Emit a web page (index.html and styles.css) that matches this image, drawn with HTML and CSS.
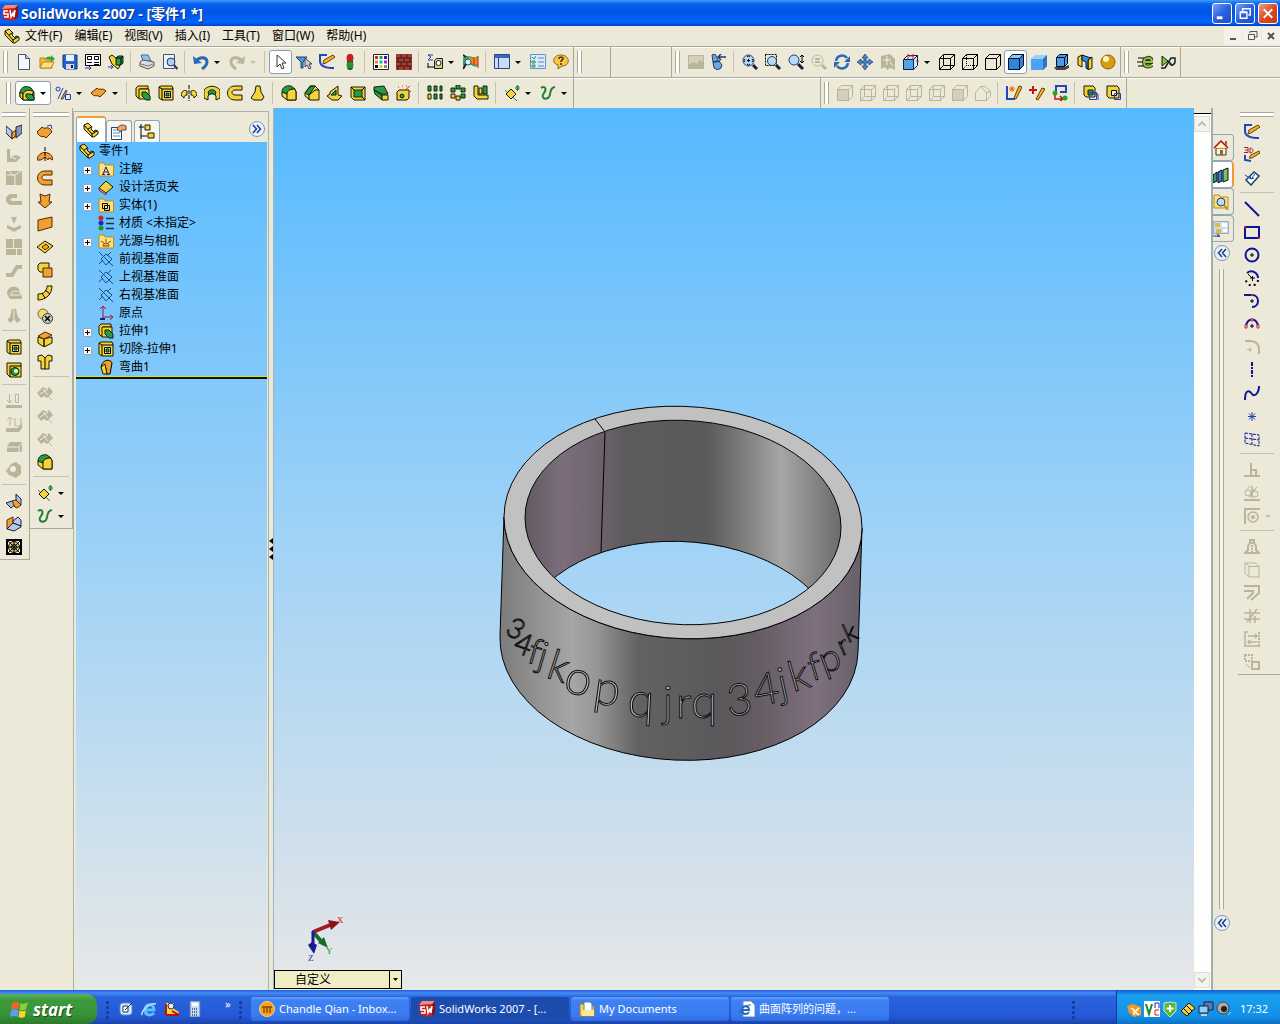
FILE: index.html
```
<!DOCTYPE html>
<html lang="zh-CN">
<head>
	<meta charset="utf-8">
	<title>SolidWorks 2007</title>
	<link rel="stylesheet" href="styles.css">
</head>
<body>
	<!-- icon sprite, 16x16 each -->
	<svg class="sprite">
		<symbol id="sw" viewBox="0 0 16 16"><path d="M0 4l3-4h13l-2 4v10l-4 2-9-2z" fill="#c4201c"/><path d="M0 4l3-4h13l-3 3z" fill="#ee8a80"/><path d="M13 4l3-4v12l-3 3z" fill="#8d0e0c"/><path d="M6 6H2v3h4v3H2M8 5l1 7 2-4 1 4 1-7" fill="none" stroke="#fff" stroke-width="1.500"/></symbol>
		<symbol id="part" viewBox="0 0 16 16"><path class="y" d="M1 3l4-2 4 4-1 2 3 3 1-2 3 1v3l-4 3h-2L1 7z"/><path class="n" d="M1 3l8 9v3M9 12l5-3M5 7l3-2"/></symbol>
		<symbol id="new" viewBox="0 0 16 16"><path d="M2.500 .5h7l4 4v11h-11z" fill="#f3f8ff" stroke="#46566e"/><path d="M9.500 .5v4h4" fill="#bcd" stroke="#46566e"/></symbol>
		<symbol id="open" viewBox="0 0 16 16"><path d="M1 4h5l1 2h6v8H1z" fill="#f0bd35" stroke="#b5812a"/><path d="M1 14l3-6h11l-3 6z" fill="#ffe477" stroke="#b5812a"/><path d="M6 5c2-3 4-3 6-2l0-2 4 4-4 3V6c-2-1-4-1-6-1z" fill="#36a62f"/></symbol>
		<symbol id="save" viewBox="0 0 16 16"><path d="M1 1h14v14H3l-2-2z" fill="#2461c8" stroke="#123b83"/><path d="M4 1h8v6H4z" fill="#eaf2ff"/><path d="M4 10h8v5H4z" fill="#cde"/><path d="M9 11h2v3H9z" fill="#124"/></symbol>
		<symbol id="drawing" viewBox="0 0 16 16"><path d="M.5 .5h15v11H.5z" fill="#fff" stroke="#000"/><path class="n" d="M2.500 2.500h4v3h-4zM9.500 2.500h4v3h-4zM9 8.500h5M2 8.500h5M9 10.500h5"/><path class="b" d="M0 14h6M4 12l2 2-2 2"/></symbol>
		<symbol id="assembly" viewBox="0 0 16 16"><path class="y" d="M1 3l3-2 5 4v4l3 3-2 3-6-5z"/><path class="g" d="M8 4l2-2h5v7l-2 2H8z"/><path class="n" d="M8 4h5v7M13 4l2-2"/><path class="b" d="M0 13h5M3 11l2 2-2 2"/></symbol>
		<symbol id="print" viewBox="0 0 16 16"><path d="M2 1h7l3 6H4z" fill="#8ec0f0" stroke="#47698f"/><path d="M1 8l3-2 11 2v4l-6 3-8-3z" fill="#ddd" stroke="#555"/><path d="M2 10l7 2 5-2" fill="none" stroke="#777"/></symbol>
		<symbol id="preview" viewBox="0 0 16 16"><path d="M1.500 .5h11v14h-11z" fill="#eaf3ff" stroke="#46566e"/><circle cx="9" cy="8" r="4" fill="#a9d1f5" stroke="#335"/><path d="M12 11l3.500 4" stroke="#335" stroke-width="2"/></symbol>
		<symbol id="undo" viewBox="0 0 16 16"><path d="M3 7c4-5 11-4 11 1 0 3-2 5-5 7" fill="none" stroke="#2a67b8" stroke-width="3"/><path d="M0 2l1 8 8-1z" fill="#2a67b8"/></symbol>
		<symbol id="redo" viewBox="0 0 16 16"><path class="d" d="M13 7C9 2 2 3 2 8c0 3 2 5 5 7" stroke-width="3"/><path class="f" d="M16 2l-1 8-8-1z"/></symbol>
		<symbol id="select" viewBox="0 0 16 16"><path d="M4 1v12l3-3 2 5 2-1-2-5h4z" fill="#fff" stroke="#334"/></symbol>
		<symbol id="filter" viewBox="0 0 16 16"><path d="M0 3h11L7 8v6H5V8z" fill="#5596cf" stroke="#1d3f69"/><path d="M9 4v9l2-2 2 4 2-1-2-4h3z" fill="#ccd" stroke="#445"/></symbol>
		<symbol id="sketch" viewBox="0 0 16 16"><path class="bb" d="M8 1H1v6c0 5 4 7 14 7"/><path d="M4 10l1-4 9-5 2 2-9 6z" fill="#f3b52d" stroke="#6b3d00"/></symbol>
		<symbol id="rebuild" viewBox="0 0 16 16"><rect x="5" y="0" width="6" height="16" rx="3" fill="#333"/><circle cx="8" cy="4" r="3.500" fill="#d21c1c"/><circle cx="8" cy="11" r="3.500" fill="#1f9432"/></symbol>
		<symbol id="color" viewBox="0 0 16 16"><path d="M.5.5h15v15H.5z" fill="#fff" stroke="#223"/><path fill="#d22" d="M2 2h3v3H2z"/><path fill="#2a2" d="M6.500 2h3v3h-3z"/><path fill="#22c" d="M11 2h3v3h-3z"/><path fill="#e82" d="M2 6.500h3v3H2z"/><path fill="#0bb" d="M6.500 6.500h3v3h-3z"/><path fill="#b2b" d="M11 6.500h3v3h-3z"/><path fill="#111" d="M2 11h3v3H2z"/><path fill="#dc2" d="M6.500 11h3v3h-3z"/><path fill="#888" d="M11 11h3v3h-3z"/></symbol>
		<symbol id="texture" viewBox="0 0 16 16"><path d="M0 0h16v16H0z" fill="#a33e33"/><path d="M0 4h16M0 8h16M0 12h16M5 0v4M11 0v4M2 4v4M8 4v4M14 4v4M5 8v4M11 8v4M2 12v4M8 12v4M14 12v4" stroke="#4b1712" fill="none"/></symbol>
		<symbol id="measure" viewBox="0 0 16 16"><path class="b" d="M6 1H1l3 2-3 3h5"/><path d="M7.500 6.500l2-2h6v10h-8z" fill="#e8ce66" stroke="#123"/><circle cx="11.500" cy="9" r="2.500" fill="#fff" stroke="#124"/><path class="n" d="M1 9v5M1 13h7"/></symbol>
		<symbol id="analysis" viewBox="0 0 16 16"><path d="M0 4c5-5 10 2 15-2v10c-5 3-7-5-15 0z" fill="#3aa05a"/><path d="M6 3c3 1 5 2 9 0v7c-4 2-6-1-9-2z" fill="#f08c22"/><path d="M11 4v7M15 2v12" stroke="#c21"/><circle cx="5" cy="8" r="3" fill="#d7edff" stroke="#357"/><path d="M3 10l-3 5M0 1l3 2" stroke="#124" stroke-width="2"/></symbol>
		<symbol id="pane" viewBox="0 0 16 16"><path d="M.5.5h15v14H.5z" fill="#c9dcf8" stroke="#274a86"/><path d="M1 1h14v3H1z" fill="#3c68b8"/><path d="M4.500 4v10" stroke="#274a86"/></symbol>
		<symbol id="options" viewBox="0 0 16 16"><path d="M.5 .5h15v14H.5z" fill="#dcecff" stroke="#6193cf"/><path d="M8 4h6M8 8h6M8 12h6" stroke="#5b82b8"/><path d="M2 3l2 2 2-3M2 7h3v2H2zM2 11h3v2H2z" fill="none" stroke="#2b8b3b"/></symbol>
		<symbol id="help" viewBox="0 0 16 16"><path d="M8 1c9 0 10 11 1 11l-4 3 0-4C-2 9 0 1 8 1z" fill="#f6c848" stroke="#8c6414"/><path d="M6 5c0-3 5-2 4 0L8 7v1M8 9v2" fill="none" stroke="#413000" stroke-width="1.500"/></symbol>
		<symbol id="render" viewBox="0 0 16 16"><path class="d" d="M.5 1.500h15v13H.5z"/><path class="f" opacity=".5" d="M1 2h14v12H1z"/><path class="f" d="M1 11l4-3 4 2 3-4 4 3v5H1z"/></symbol>
		<symbol id="torch" viewBox="0 0 16 16"><path d="M1 1l3-1 3 6 4 5-1 3-3 2-4-2-1-6z" fill="#6ea6dc" stroke="#1c3c66"/><path d="M2 8l7-1M7 3h8M10 0L7 3l3 3" fill="none" stroke="#1c3c66" stroke-width="1.500"/></symbol>
		<symbol id="zoomfit" viewBox="0 0 16 16"><circle cx="6.500" cy="6.500" r="5.500" class="lens"/><path class="n" d="M5 3l1.500-1L8 3M5 10l1.500 1L8 10M3 5L2 6.500 3 8M10 5l1 1.500L10 8M5 6.500h3M6.500 5v3"/><path class="hd" d="M11 11l4 4"/></symbol>
		<symbol id="zoomarea" viewBox="0 0 16 16"><path class="n" d="M.5.5h11v11H.5z" stroke-dasharray="2 1"/><circle cx="7" cy="7" r="4.500" class="lens"/><path class="hd" d="M11 11l4 4"/></symbol>
		<symbol id="zoominout" viewBox="0 0 16 16"><circle cx="6" cy="6" r="5" class="lens"/><path class="hd" d="M10 10l5 5"/><path class="n" d="M14 1v8M12 3l2-2 2 2M12 7l2 2 2-2"/></symbol>
		<symbol id="zoomsel" viewBox="0 0 16 16"><circle cx="6.500" cy="6.500" r="5.500" class="d"/><path class="d" stroke-width="2" d="M4 5h5M4 8h5"/><path class="d" stroke-width="3" d="M11 11l4 4"/></symbol>
		<symbol id="rotate" viewBox="0 0 16 16"><path d="M2 7c1-6 8-7 11-3M14 9c-1 6-8 7-11 3" fill="none" stroke="#2d6ab6" stroke-width="2.500"/><path d="M16 2v6h-6zM0 14V8h6z" fill="#2d6ab6"/></symbol>
		<symbol id="pan" viewBox="0 0 16 16"><path d="M8 0l3 4H9v3h3V5l4 3-4 3V9H9v3h2l-3 4-3-4h2V9H4v2L0 8l4-3v2h3V4H5z" fill="#4c86c9" stroke="#173d74" stroke-width=".7"/></symbol>
		<symbol id="globe" viewBox="0 0 16 16"><path class="f" d="M1 2l9-2 5 5v11l-5-2-3 2-2-3-4 2z"/><path stroke="#eee" d="M3 6h8M7 2v9M10 8l3 4" fill="none"/></symbol>
		<symbol id="views" viewBox="0 0 16 16"><path d="M.5 5.500h10v10H.5z" fill="#4ea5e8" stroke="#124"/><path d="M.5 5.500l4-4h10l-4 4zM10.500 5.500l4-4v10l-4 4z" fill="#d7e8f7" stroke="#124"/><path d="M5 0v5M10 0v5M13 7h3M6 2h4" stroke="#c22"/></symbol>
		<symbol id="wire" viewBox="0 0 16 16"><path class="n" d="M.5 4.500h11v11h-11zM4.500 .5h11v11h-11zM.5 4.500l4-4M11.500 4.500l4-4M11.500 15.500l4-4M.5 15.500l4-4"/></symbol>
		<symbol id="hlv" viewBox="0 0 16 16"><path class="n" d="M.5 4.500h11v11h-11zM4.500 .5h11v11M.5 4.500l4-4M11.500 4.500l4-4M11.500 15.500l4-4"/><path class="n" stroke-dasharray="1 1" d="M4.500 1v10.500h11M4.500 11.500l-4 4"/></symbol>
		<symbol id="hlr" viewBox="0 0 16 16"><path class="n" d="M.5 4.500h11v11h-11zM4.500 .5h11v11M.5 4.500l4-4M11.500 4.500l4-4M11.500 15.500l4-4"/></symbol>
		<symbol id="shadededge" viewBox="0 0 16 16"><path d="M.5 4.500l4-4h11v11l-4 4H.5z" fill="#2f86d8" stroke="#012"/><path d="M1 4l4-3h10l-4 3z" fill="#8fc7f7"/><path d="M.5 4.500h11v11M11.500 4.500l4-4" fill="none" stroke="#012"/></symbol>
		<symbol id="shaded" viewBox="0 0 16 16"><path d="M0 5l5-4h11v11l-4 4H0z" fill="#4ba2ee"/><path d="M0 5l5-4h11l-4 4z" fill="#9bd0fb"/><path d="M12 5l4-4v11l-4 4z" fill="#2b74c4"/></symbol>
		<symbol id="shadow" viewBox="0 0 16 16"><path d="M0 13h10l5-2v3l-4 2H2z" fill="#444"/><path d="M2.500 3.500l3-3h8v9l-3 3h-8z" fill="#4d9ae0" stroke="#012"/><path d="M2.500 3.500h8v9M10.500 3.500l3-3" fill="none" stroke="#012"/></symbol>
		<symbol id="section" viewBox="0 0 16 16"><path class="y" d="M1 3l4-2v12l-4-2z"/><path class="y" d="M11 5l4-2v11l-4 2z"/><path d="M5 1l6 2 3 1-3 2v9l-2-1V8L5 6z" fill="#3d8bd2" stroke="#012"/></symbol>
		<symbol id="ball" viewBox="0 0 16 16"><circle cx="8" cy="8" r="7" fill="#d99c12" stroke="#8c6010"/><circle cx="6" cy="5" r="3" fill="#fff3b0"/></symbol>
		<symbol id="edraw" viewBox="0 0 16 16"><path class="n" d="M1 4h6M0 8h5M1 12h6"/><path d="M7 8h8c0-6-8-5-8 0 0 6 6 5 8 3" fill="none" stroke="#233" stroke-width="4"/><path d="M7 8h8c0-6-8-5-8 0 0 6 6 5 8 3" fill="none" stroke="#9dc52c" stroke-width="2"/></symbol>
		<symbol id="animate" viewBox="0 0 16 16"><path d="M2 2l6 5-6 5z" fill="#8cbf3c" stroke="#122"/><path d="M1 14h4L11 4h4v4c-1 4-5 4-5 1M8 7l4 4" fill="none" stroke="#122" stroke-width="1.500"/></symbol>
		<!-- features -->
		<symbol id="featmgr" viewBox="0 0 16 16"><path class="g" d="M1 7c1-5 6-7 11-4l3 4v8H4l-3-3z"/><path class="y" d="M1 7l3 2v6l-3-3z"/><path class="y" d="M4 9c2-4 6-5 11-2l-2 2v6H4z"/><path class="g" d="M7 9h5l3 3v3h-5l-3-3z"/></symbol>
		<symbol id="sketchmgr" viewBox="0 0 16 16"><circle cx="3" cy="4" r="2" class="b"/><path class="b" d="M3 14L8 3M10.500 9.500h5v5h-5z"/><path d="M6 14l5-9 1 1-4 8z" fill="#f3b52d" stroke="#446"/></symbol>
		<symbol id="surfmgr" viewBox="0 0 16 16"><path class="o" d="M0 8l6-5c2 3 5-1 9 3l-6 6c-3-3-5 1-9-4z"/></symbol>
		<symbol id="extrude" viewBox="0 0 16 16"><path class="y" d="M1 3l2-2h10v3H5v9H3l-2-2z"/><path class="y" d="M4 4h10v10H4z"/><path class="g" d="M7 7h4l4 4v4h-4l-4-4z"/></symbol>
		<symbol id="cut" viewBox="0 0 16 16"><path class="y" d="M1 2l2-1h11l1 2v12H4l-3-2z"/><path class="n" d="M4 4h11M4 4v11M1 2l3 2"/><path d="M6.500 6.500h6v6h-6z" fill="#fff7bd" stroke="#000"/><path class="g" d="M8 8h3v3H8z"/></symbol>
		<symbol id="revolve" viewBox="0 0 16 16"><path class="y" d="M0 10c1-5 4-5 6-4v4c-2 0-3 1-3 3zM16 10c-1-5-4-5-6-4v4c2 0 3 1 3 3z"/><path class="n" d="M8 0v16" stroke-dasharray="4 1"/></symbol>
		<symbol id="dome" viewBox="0 0 16 16"><path class="y" d="M0 5c4-5 12-5 16 0v8l-4 2v-4c-2-3-6-3-8 0v4l-4-2z"/><path class="g" d="M4 7c2-3 6-3 8 0l-1 3c-2-2-4-2-6 0z"/></symbol>
		<symbol id="sweep" viewBox="0 0 16 16"><path class="y" d="M15 1v4H8c-4 0-4 5 0 5h7v5H8C-2 15-2 1 8 1z"/></symbol>
		<symbol id="loft" viewBox="0 0 16 16"><path class="y" d="M6 1h4l1 6 3 5-2 3H4l-3-2 4-6z"/></symbol>
		<symbol id="fillet" viewBox="0 0 16 16"><path class="y" d="M1 7l5 1 9-2v9H6l-5-4z"/><path class="g" d="M1 7c0-5 5-7 9-6l4 3c-4 0-8 1-8 5z"/><path class="y" d="M14 4l1 3v8H6V9c0-4 4-5 8-5z"/></symbol>
		<symbol id="chamfer" viewBox="0 0 16 16"><path class="y" d="M1 8l5-7h5l4 4v10H6l-5-4z"/><path class="g" d="M1 8l6-7h4L5 10z"/><path class="n" d="M5 10l6-5h4M5 10v5"/></symbol>
		<symbol id="rib" viewBox="0 0 16 16"><path class="y" d="M0 11l3-2V7l8-6v9l4 1-4 4H5z"/><path class="g" d="M4 10l5-5v5z"/></symbol>
		<symbol id="shell" viewBox="0 0 16 16"><path class="y" d="M1 2h14v13H4l-3-3z"/><path class="g" d="M4 5h8v7H4z"/><path class="n" d="M1 2l3 3M15 2l-3 3M12 12l3 3"/></symbol>
		<symbol id="draft" viewBox="0 0 16 16"><path class="g" d="M1 2l10-1 4 8H9L1 5z"/><path class="g" d="M1 5l8 5v5L2 9z"/><path class="y" d="M9 10h6v5H9z"/></symbol>
		<symbol id="hole" viewBox="0 0 16 16"><path class="y" d="M1 7l2-2h10v8l-2 2H1z"/><circle cx="6" cy="11" r="2" class="g"/><path d="M9 5l5-4M2 2h1M6 1h1M10 1h1M14 6l1 1" stroke="#c42" fill="none"/></symbol>
		<symbol id="lpattern" viewBox="0 0 16 16"><path class="g" d="M1 1h3v5H1zM7 1h3v5H7zM13 1h2v5h-2zM7 9h3v5H7zM13 9h2v5h-2z"/><path class="y" d="M1 9h3v5H1z"/></symbol>
		<symbol id="cpattern" viewBox="0 0 16 16"><path class="g" d="M6 0h4v4H6zM11 3h4v4h-4zM11 9h4v4h-4zM1 3h4v4H1z"/><path class="y" d="M6 11h4v4H6zM1 9h4v4H1z"/></symbol>
		<symbol id="mirror" viewBox="0 0 16 16"><path class="y" d="M1 1h4v9h10v4H4l-3-3z"/><path class="g" d="M10 1h4v8h-4z"/><path class="y" d="M6 3h3v6H6z"/></symbol>
		<symbol id="refgeo" viewBox="0 0 16 16"><path d="M1 5l12 11M11 3h5M13.500 0v6M12 1l3 4M15 1l-3 4" fill="none" stroke="#258032"/><path class="y" d="M2 9l5-5 5 5-5 5z"/></symbol>
		<symbol id="curve" viewBox="0 0 16 16"><path d="M1 3c4-3 6 1 3 5s0 7 4 5 0-10 7-11" fill="none" stroke="#258032" stroke-width="2"/></symbol>
		<symbol id="cube1" viewBox="0 0 16 16"><path class="d" d="M.5 4.500h11v11H.5zM.5 4.500l4-4h11v11l-4 4M11.500 4.500l4-4"/><path class="f" opacity=".5" d="M1 5h10v10H1z"/></symbol>
		<symbol id="cube2" viewBox="0 0 16 16"><path class="d" d="M.5 4.500h11v11H.5zM4.500.5h11v11h-11zM.5 4.500l4-4M11.500 4.500l4-4M11.500 15.500l4-4M.5 15.500l4-4"/></symbol>
		<symbol id="cube3" viewBox="0 0 16 16"><path class="d" d="M.5 7.500l5-6h5l5 5v5l-4 4H.5zM5.500 1.500l6 6v8M11.500 7.500l4-1"/></symbol>
		<symbol id="sk1" viewBox="0 0 16 16"><path class="bb" d="M1 1v13h8"/><path d="M8 13l5-12 3 1-6 12z" fill="#f3b52d" stroke="#6b3d00"/><path d="M3 4h6M6 1v6M4 2l4 4M8 2L4 6" stroke="#e60"/></symbol>
		<symbol id="sk2" viewBox="0 0 16 16"><path d="M0 5h8M4 1v8" stroke="#c11" stroke-width="2"/><path d="M7 14l6-11 3 1-7 11z" fill="#f3b52d" stroke="#6b3d00"/></symbol>
		<symbol id="sk3" viewBox="0 0 16 16"><path class="bb" d="M4 6V1h10v6H8"/><circle cx="3" cy="8" r="2.500" fill="#2a2"/><path d="M3 10v4h7M8 11l3 3-3 2" fill="none" stroke="#c11" stroke-width="1.500"/><circle cx="13" cy="13" r="2.500" fill="#2a2"/></symbol>
		<symbol id="lib1" viewBox="0 0 16 16"><path class="y" d="M1 1h9l2 2v9H3l-2-2z"/><path class="g" d="M5 5h5v5H5z"/><path class="b" d="M6.500 7.500h7v7h-7zM9 9h6v6"/></symbol>
		<symbol id="lib2" viewBox="0 0 16 16"><path class="y" d="M1 1h10l2 2v10H3l-2-2z"/><path d="M5.500 5.500h5v5h-5z" fill="#fff7bd" stroke="#000"/><path class="b" d="M8.500 8.500h6v6h-6z"/></symbol>
		<!-- sheet metal / surfaces -->
		<symbol id="plate" viewBox="0 0 16 16"><path d="M0 2l6 5v8L0 9z" fill="#b5c6e8" stroke="#223"/><path class="o" d="M6 9l4-3v6l-4 3z"/><path d="M10 3l6-2v8l-6 5z" fill="#8599c4" stroke="#223"/></symbol>
		<symbol id="s1" viewBox="0 0 16 16"><path class="f" d="M1 2h3v8l6-2 5 2-5 5H1z"/><path d="M4 10l6 2M8 3v5" stroke="#eee" fill="none"/></symbol>
		<symbol id="s2" viewBox="0 0 16 16"><path class="f" d="M0 1h16v14H0z"/><path d="M1 5h8v10M9 5l6-4M3 1l6 6" stroke="#eeebdc" fill="none"/></symbol>
		<symbol id="s3" viewBox="0 0 16 16"><path class="f" d="M11 1H6C-2 1-2 12 6 12h10V8H6c-2 0-2-3 0-3h5z"/></symbol>
		<symbol id="s4" viewBox="0 0 16 16"><path class="f" d="M5 1h6l-3 7zM1 9l7 3 7-3v3l-7 4-7-4z"/></symbol>
		<symbol id="s5" viewBox="0 0 16 16"><path class="f" d="M0 0h7v9H0zM8 0h8v9H8zM0 10h10v6H0zM11 10h5v6h-5z"/></symbol>
		<symbol id="s6" viewBox="0 0 16 16"><path class="f" d="M0 11h5l5-8h6v4h-4l-5 8H0z"/></symbol>
		<symbol id="s7" viewBox="0 0 16 16"><path class="f" d="M1 9C1 2 8-1 13 4l1 5h2v5H4z"/><path d="M4 10h12M5 10c0-4 5-5 8-3" stroke="#eeebdc" fill="none"/></symbol>
		<symbol id="s8" viewBox="0 0 16 16"><path class="f" d="M6 1h4l2 8 3 3-4 3-3-4-3 4-4-3 3-3z"/><path d="M8 2v9" stroke="#eeebdc"/></symbol>
		<symbol id="s9" viewBox="0 0 16 16"><path class="d" d="M3.500 1v8M1 7l3 3 2-3M9.500 1.500h3v8h-3z"/><path class="f" d="M0 12h16v3H0z"/></symbol>
		<symbol id="s10" viewBox="0 0 16 16"><path class="d" d="M4 10V2M1 4l3-3 3 3M9 2v8h6V2"/><path class="f" d="M0 12h12l4-6v6l-3 4H0z"/></symbol>
		<symbol id="s11" viewBox="0 0 16 16"><path class="f" d="M1 7l3-4h12v9l-2 1H1z"/><path d="M1 8h12l3-4M13 8v5" stroke="#eeebdc" fill="none"/></symbol>
		<symbol id="s12" viewBox="0 0 16 16"><path class="f" d="M5 2l5-2 5 4v8l-5 4-7-3-3-4z"/><circle cx="7" cy="7" r="3" fill="#eeebdc"/></symbol>
		<symbol id="cutgreen" viewBox="0 0 16 16"><path class="y" d="M1 1h14v14H4l-3-3z"/><path class="n" d="M4 4h11M4 4v11"/><circle cx="9" cy="9.500" r="4" class="g"/><circle cx="10" cy="9" r="2" fill="#dfd"/></symbol>
		<symbol id="fold1" viewBox="0 0 16 16"><path d="M10 1l5 5v6l-5-4zM0 10l6-2 4 3-5 4z" fill="#a9bbe2" stroke="#223"/><path class="o" d="M6 8l4-1 5 5-4 3-2-1z"/></symbol>
		<symbol id="fold2" viewBox="0 0 16 16"><path class="o" d="M1 4l6-3v6l-6 6z"/><path d="M7 5l5-4 3 3v7l-7 4-7-2 6-6z" fill="#b5c8ee" stroke="#223"/><path class="n" d="M7 7l8 3"/></symbol>
		<symbol id="vent" viewBox="0 0 16 16"><path d="M1 1h14v14H1z" fill="#fff" stroke="#000" stroke-width="2"/><circle cx="8" cy="8" r="5.500" fill="#e0c36a" stroke="#000"/><circle cx="8" cy="8" r="2.500" class="n"/><path class="n" d="M8 1v14M1 8h14M2 2l12 12M14 2L2 14"/></symbol>
		<symbol id="u1" viewBox="0 0 16 16"><path class="o" d="M0 8l5-5c3 3 5-1 8 2l2 3-6 6c-2-3-6 1-9-6z"/><path class="b" d="M10 2l4-1 1 4"/></symbol>
		<symbol id="u2" viewBox="0 0 16 16"><path class="o" d="M0 13C1 3 15 3 16 13l-4-2-1 2-3-3-4 3z"/><path class="n" d="M8 0v15" stroke-dasharray="4 1"/></symbol>
		<symbol id="u3" viewBox="0 0 16 16"><path class="o" d="M15 1v4H8c-4 0-4 5 0 5h7v5H8C-2 15-2 1 8 1z"/></symbol>
		<symbol id="u4" viewBox="0 0 16 16"><path class="o" d="M3 1l5 2 5-2-1 8h3l-7 6-7-6h3z"/></symbol>
		<symbol id="u5" viewBox="0 0 16 16"><path class="o" d="M1 4l14-3v10L1 15z"/></symbol>
		<symbol id="u6" viewBox="0 0 16 16"><path class="y" d="M0 8l8-6 8 5-8 7z"/><path class="o" d="M5 8l4-3 3 3-4 3z"/></symbol>
		<symbol id="u7" viewBox="0 0 16 16"><path class="y" d="M1 3l2-2h9v9H3l-2-2z"/><path class="o" d="M6 6h9v9H6z"/></symbol>
		<symbol id="u8" viewBox="0 0 16 16"><path class="y" d="M10 1h5c0 8-6 14-14 14v-6c6 0 9-3 9-8z"/><path class="n" d="M5 8l3 5M8 5l5 4"/></symbol>
		<symbol id="u9" viewBox="0 0 16 16"><circle cx="6" cy="6" r="5" fill="#f0dd6a" stroke="#665"/><circle cx="10.500" cy="10.500" r="5" fill="#ccc" stroke="#333"/><path stroke="#000" stroke-width="1.500" d="M8 8l5 5M13 8l-5 5"/></symbol>
		<symbol id="u10" viewBox="0 0 16 16"><path class="y" d="M1 6l6 2v8l-6-4zM7 8l8-2v6l-8 4z"/><path class="o" d="M1 5l7-4 7 3-8 4z"/></symbol>
		<symbol id="u11" viewBox="0 0 16 16"><path class="y" d="M1 2l4-1 3 3 3-3 4 1v5h-3v8H4V7H1z"/><path class="n" d="M8 4v11"/></symbol>
		<symbol id="x1" viewBox="0 0 16 16"><path class="f" d="M0 8l6-6 4 2 2-2 4 5-6 6-3-2-3 2z"/><path class="d" d="M9 9l6 6"/><path d="M3 9l8-5M6 4l5 6" stroke="#eeebdc" fill="none"/></symbol>
		<!-- tree -->
		<symbol id="folderA" viewBox="0 0 16 16"><path class="fo" d="M1 2h5l1 2h8.500v11H1z"/><path d="M5 13l3-7 3 7M6 11h4M4 13.500h3M9 13.500h3" fill="none" stroke="#128"/></symbol>
		<symbol id="binder" viewBox="0 0 16 16"><path class="y" d="M1 9l7-7 7 6-7 6z"/><path d="M1 9l7 5v2L1 11z" fill="#e99" stroke="#633"/></symbol>
		<symbol id="folderB" viewBox="0 0 16 16"><path class="fo" d="M1 2h5l1 2h8.500v11H1z"/><path class="n" d="M4.500 6.500h5v5h-5zM6.500 8.500h5v5h-5z"/></symbol>
		<symbol id="material" viewBox="0 0 16 16"><circle cx="3" cy="3" r="2.500" fill="#c22"/><circle cx="3" cy="8" r="2.500" fill="#22b"/><circle cx="3" cy="13" r="2.500" fill="#292"/><path d="M8 3.500h8M8 8.500h8M8 13.500h8" stroke="#234" stroke-width="1.500"/></symbol>
		<symbol id="light" viewBox="0 0 16 16"><path class="fo" d="M1 2h5l1 2h8.500v11H1z"/><path d="M5 13c0-4 6-4 6 0zM8 6v3M3 8l3 2M13 8l-3 2" fill="#fb2" stroke="#742"/></symbol>
		<symbol id="plane" viewBox="0 0 16 16"><path d="M3 8l5-5 6 5-6 6zM1 1l14 14M1 13l4-4M9 5l4-4" fill="none" stroke="#1b4a8c"/></symbol>
		<symbol id="origin" viewBox="0 0 16 16"><path d="M5 14V2M2 4l3-3 3 3M5 12h9M12 10l3 2-3 3" fill="none" stroke="#a1163c"/><path d="M2 14h5" stroke="#128" stroke-width="2"/></symbol>
		<symbol id="flex" viewBox="0 0 16 16"><path d="M3 8c1-7 9-9 11-4l-2 11H8V9z" fill="#eda32a" stroke="#000"/><path class="y" d="M3 8l4-3 2 10H5z"/></symbol>
		<symbol id="props" viewBox="0 0 16 16"><path d="M.5 3.500h10v12H.5z" fill="#fff" stroke="#247"/><path d="M2 6h7M2 9h7M2 12h7" stroke="#58b"/><path d="M6 5c2-4 5-5 9-3v4h-4l-2 2z" fill="#e6a878" stroke="#643"/></symbol>
		<symbol id="config" viewBox="0 0 16 16"><path class="n" d="M2 0v15M0 3h5M2 12h6"/><path class="y" d="M6 1h5v5H6zM9 9h6v5H9z"/></symbol>
		<symbol id="plus" viewBox="0 0 9 9"><path d="M.5.5h8v8h-8z" fill="#fff" stroke="#98a8b8"/><path d="M2 4.500h5M4.500 2v5" stroke="#000"/></symbol>
		<!-- sketch tools -->
		<symbol id="sk3d" viewBox="0 0 16 16"><path d="M0 .5h4v5H0M1 3h3M6 1v5c4 0 4-5 0-5z" fill="none" stroke="#a22"/><path class="bb" d="M1 8v5l6 1"/><path d="M5 11l2-3 8-4 1 2-8 5z" fill="#f3b52d" stroke="#6b3d00"/></symbol>
		<symbol id="dim" viewBox="0 0 16 16"><path d="M2 10l8-8 5 4-8 9z" fill="#fff" stroke="#146" stroke-width="1.500"/><path class="b" d="M1 5l6 4 4-5M6 6l1 3 3-1"/></symbol>
		<symbol id="line" viewBox="0 0 16 16"><path class="k" d="M1 1l14 14"/></symbol>
		<symbol id="rect" viewBox="0 0 16 16"><path class="k" d="M1 3h14v11H1z"/><path fill="#c22" d="M0 2h2v2H0zM14 13h2v2h-2z"/></symbol>
		<symbol id="circle" viewBox="0 0 16 16"><circle cx="8" cy="8" r="6.500" class="k"/><path class="n" d="M8 6v4M6 8h4"/></symbol>
		<symbol id="arc1" viewBox="0 0 16 16"><path class="k" d="M3 3c5-4 11 0 11 5"/><path class="n" stroke-width="2" d="M14 10a6 6 0 0 1-12-1" stroke-dasharray="2 3"/><path class="n" d="M4 4l5 5M6 8h5M8.500 6v5"/></symbol>
		<symbol id="arc2" viewBox="0 0 16 16"><path class="k" d="M0 2h8c8 0 8 12 0 12"/><path fill="#c22" d="M7 1h2v2H7z"/><path class="n" d="M8 6v4M6 8h4"/></symbol>
		<symbol id="arc3" viewBox="0 0 16 16"><path class="k" d="M2 11c0-10 12-10 12 0"/><path class="rd" d="M1 9h2v3H1zM13 9h2v3h-2zM7 3h2v2H7z"/><path class="n" d="M8 8v4M6 10h4"/></symbol>
		<symbol id="skfillet" viewBox="0 0 16 16"><path class="d" stroke-width="2" d="M1 2h5c6 0 9 3 9 9v4"/><path class="d" d="M6 8v5M3 10.500h5"/></symbol>
		<symbol id="center" viewBox="0 0 16 16"><path class="k" d="M8 0v16" stroke-dasharray="4 1 2 1"/></symbol>
		<symbol id="spline" viewBox="0 0 16 16"><path class="k" d="M1 15c0-12 5-9 7-6s7 0 7-8"/></symbol>
		<symbol id="point" viewBox="0 0 16 16"><path class="b" d="M8 4v9M4 8.500h8M5 5.500l6 6M11 5.500l-6 6"/></symbol>
		<symbol id="grid" viewBox="0 0 16 16"><path d="M1 2l14 2v11L1 12zM1 7l14 2M8 3v10" fill="none" stroke="#0c149c" stroke-dasharray="3 1"/></symbol>
		<symbol id="r1" viewBox="0 0 16 16"><path class="d" stroke-width="2" d="M0 14h16M7 1v13M7 8h5v6"/></symbol>
		<symbol id="r2" viewBox="0 0 16 16"><path class="d" stroke-width="2" d="M0 15h16"/><path class="d" stroke-width="1.500" d="M8 1v12M5 12l6-8"/><circle cx="4" cy="8" r="3" class="d"/><circle cx="11" cy="9" r="3" class="d"/><path class="d" d="M2 6l4-5M9 7l4-5"/></symbol>
		<symbol id="r3" viewBox="0 0 16 16"><path class="d" stroke-width="2" d="M1 16V1h15"/><circle cx="9" cy="9" r="5" class="d" stroke-width="1.500"/><circle cx="9" cy="9" r="2" class="f"/></symbol>
		<symbol id="r4" viewBox="0 0 16 16"><path class="d" stroke-width="2" d="M6 1h4v3l2 3v4l3 3H1l3-3V7l2-3z"/><path class="d" stroke-width="2" d="M8 3v10" stroke-dasharray="2 1"/></symbol>
		<symbol id="r5" viewBox="0 0 16 16"><path class="d" d="M1 4V1h10l4 3v11H5l-4-4zM5 4.500h10M5 4v11M1 1l4 3"/></symbol>
		<symbol id="r6" viewBox="0 0 16 16"><path class="d" stroke-width="2" d="M0 1h15v7l-8 7M0 6h9v2l-6 6"/></symbol>
		<symbol id="r7" viewBox="0 0 16 16"><path class="d" stroke-width="1.500" d="M0 5h16M0 11h16M6 1v14M3 14L13 1M11 8v7"/></symbol>
		<symbol id="r8" viewBox="0 0 16 16"><path class="d" stroke-width="1.500" d="M0 1h4M0 15h16M1 1v14M4 5h9M4 11h9M11 3l2 2-2 2M6 9l-2 2 2 2"/><path class="d" stroke-width="2" stroke-dasharray="2 1" d="M15 1v14"/></symbol>
		<symbol id="r9" viewBox="0 0 16 16"><path class="d" stroke-width="2" stroke-dasharray="2 1" d="M1 1h7v6H1z"/><path class="d" stroke-width="2" d="M8 8h7v7H8z"/><path class="d" d="M2 10l4 4"/></symbol>
		<!-- task pane -->
		<symbol id="home" viewBox="0 0 16 16"><path d="M3 8h10v7H3z" fill="#fff3c0" stroke="#333"/><path d="M1 8l7-7 7 7" fill="#fff3c0" stroke="#a11" stroke-width="1.500"/><path d="M7 10h3v5H7zM12 1h2v4h-2z" fill="#963"/></symbol>
		<symbol id="books" viewBox="0 0 16 16"><path d="M0 8l4-3v9l-4 2z" fill="#396" stroke="#012"/><path d="M5 5l4-2v11l-4 2z" fill="#4a7ac8" stroke="#012"/><path d="M10 3l5-2v12l-5 2z" fill="#7cc06a" stroke="#012"/></symbol>
		<symbol id="search" viewBox="0 0 16 16"><path class="fo" d="M1 1h5l1 2h8v11H1z"/><circle cx="8" cy="8" r="4" class="lens"/><path d="M11 11l4 5" stroke="#b84" stroke-width="2"/></symbol>
		<symbol id="palette" viewBox="0 0 16 16"><path d="M.5.5h15v12H.5z" fill="#ccdcf0" stroke="#9ab"/><path d="M2 2h5v4H2zM3 8h5v4H3z" fill="#dfb93c"/><path d="M9 2h5v4H9zM10 8h4v3h-4z" fill="#fff"/><path class="b" d="M0 15h6M4 13l3 2-3 1"/></symbol>
		<symbol id="dl" viewBox="0 0 16 16"><circle cx="8" cy="8" r="7.500" fill="#eaf1fd" stroke="#7d97c4"/><path d="M8 4L4.500 8 8 12M12 4L8.500 8l3.500 4" fill="none" stroke="#17407e" stroke-width="1.500"/></symbol>
		<symbol id="dr" viewBox="0 0 16 16"><circle cx="8" cy="8" r="7.500" fill="#eaf1fd" stroke="#7d97c4"/><path d="M4 4l3.500 4L4 12M8 4l3.500 4L8 12" fill="none" stroke="#17407e" stroke-width="1.500"/></symbol>
		<!-- taskbar -->
		<symbol id="win" viewBox="0 0 18 18"><path fill="#f0632a" d="M2 3c3-2 5-1 7 0L8 9c-2-1-4-1-7 0z"/><path fill="#8dd03a" d="M10 3c2 1 4 1 7-1l-2 7c-2 1-4 1-6 0z"/><path fill="#5b9ef5" d="M1 10c3-2 5-1 7 0l-1 6c-2-1-4-1-7 0z"/><path fill="#fbd130" d="M9 10c2 1 4 1 6 0l-1 6c-3 1-4 1-6 0z"/></symbol>
		<symbol id="ie" viewBox="0 0 16 16"><path d="M4 9h9c0-7-9-7-9 0 0 6 6 6 9 3" fill="none" stroke="#5dc0f8" stroke-width="3"/><path d="M1 14C0 10 9 1 15 3" fill="none" stroke="#b9e4ff" stroke-width="1.500"/></symbol>
		<symbol id="desk" viewBox="0 0 16 16"><rect x="2" y="2" width="12" height="12" rx="3" fill="#d4ebfa" stroke="#4b94c8"/><path d="M5 5h5v6H5zM7 9l7-7" fill="#fff" stroke="#235"/></symbol>
		<symbol id="find" viewBox="0 0 16 16"><path d="M2 2h8v6l5 3-1 3H1z" fill="#ffd83c"/><path d="M2 14V3M8 10l7 4M2 14h12" stroke="#b11" stroke-width="2"/><circle cx="7" cy="5" r="3" fill="#eee" stroke="#235"/></symbol>
		<symbol id="calc" viewBox="0 0 16 16"><path d="M3 0h10v16H3z" fill="#c8dcf4" stroke="#5674a8"/><path d="M5 2h6v3H5z" fill="#fff"/><path d="M5 8h6M5 11h6M5 14h6" stroke="#4a68a4" stroke-dasharray="1 1" stroke-width="2"/></symbol>
		<symbol id="mail" viewBox="0 0 16 16"><circle cx="8" cy="8" r="7.500" fill="#f6a01e" stroke="#ffd27a"/><path d="M3 6h10M5 6v6M8 6v6M11 6v6" stroke="#8c4a00" stroke-width="1.500"/></symbol>
		<symbol id="docs" viewBox="0 0 16 16"><path d="M1 3h4l1 2h9v10H1z" fill="#f5d564" stroke="#a8822a"/><path d="M5 1h6l2 2v9H5z" fill="#fff" stroke="#58a"/><path d="M3 9h12v6H3z" fill="#ffe78e"/></symbol>
		<symbol id="iedoc" viewBox="0 0 16 16"><path d="M4 0h8l4 4v12H4z" fill="#fff" stroke="#889"/><path d="M3 9h7c0-5-7-5-7 0 0 5 5 5 7 2" fill="none" stroke="#2468c4" stroke-width="2"/><path d="M0 13C0 9 7 3 12 4" fill="none" stroke="#2468c4"/></symbol>
		<symbol id="t1" viewBox="0 0 16 16"><path d="M1 5l6-2 8 3v8l-7 2-5-4z" fill="#f59a22"/><path d="M5 7l3 2v5M13 7l-4 4 4 3" stroke="#fff" stroke-width="1.500" fill="none"/></symbol>
		<symbol id="t2" viewBox="0 0 16 16"><path d="M0 0h16v16H0z" fill="#fff"/><path d="M2 3l3 10L8 3" fill="none" stroke="#1a8a2a" stroke-width="2"/><path d="M11 7V2h4v5" fill="none" stroke="#22c"/><path d="M15 9h-4v5h4" fill="none" stroke="#c22"/></symbol>
		<symbol id="t3" viewBox="0 0 16 16"><path d="M2 2l6-1 6 1v8l-6 6-6-6z" fill="#58b83c" stroke="#cfe9b8"/><path d="M8 4v7M4.500 7.500h7" stroke="#fff" stroke-width="2"/></symbol>
		<symbol id="t4" viewBox="0 0 16 16"><path class="y" d="M1 10l8-8 6 5-8 8z"/><path d="M4 8l5 5M7 5l5 5" stroke="#000"/></symbol>
		<symbol id="t5" viewBox="0 0 16 16"><path d="M6 1h9v8H6z" fill="#5a78b8" stroke="#123"/><path d="M1 5h9v7H1z" fill="#8fd0ff" stroke="#123"/><path d="M3 14h6" stroke="#ccd" stroke-width="2"/></symbol>
		<symbol id="t6" viewBox="0 0 16 16"><circle cx="7" cy="7" r="6" fill="#aaa" stroke="#444"/><circle cx="8" cy="8" r="3" fill="#222"/><path d="M12 14l3-3" stroke="#9cf"/></symbol>
	</svg>

	<header class="title">
		<svg class="ic"><use href="#sw"/></svg>
		<h1>SolidWorks 2007 - [零件1 *]</h1>
		<button class="cap" title="Minimize"><svg viewBox="0 0 19 19"><path d="M4 14h6" stroke-width="3"/></svg></button>
		<button class="cap" title="Restore"><svg viewBox="0 0 19 19"><path d="M7 7V4.500h8V11h-2M4.500 8.500h7v6h-7zM4 8h8" stroke-width="1.500"/></svg></button>
		<button class="cap close" title="Close"><svg viewBox="0 0 19 19"><path d="M5 5l9 9M14 5l-9 9" stroke-width="2"/></svg></button>
	</header>

	<nav class="menu">
		<svg class="ic"><use href="#part"/></svg>
		<a href="#">文件(F)</a>
		<a href="#">编辑(E)</a>
		<a href="#">视图(V)</a>
		<a href="#">插入(I)</a>
		<a href="#">工具(T)</a>
		<a href="#">窗口(W)</a>
		<a href="#">帮助(H)</a>
		<span class="fill"></span>
		<button title="Minimize"><svg viewBox="0 0 18 18"><path d="M6 12h6" stroke-width="2"/></svg></button>
		<button title="Restore"><svg viewBox="0 0 18 18"><path d="M7 6V4.500h7V10h-2M5.500 7.500h6v5h-6z"/></svg></button>
		<button title="Close"><svg viewBox="0 0 18 18"><path d="M6 6l6 6M12 6l-6 6" stroke-width="2"/></svg></button>
	</nav>

	<div class="row">
		<div class="bar" data-tools="new open save drawing assembly | print preview | undo+ redo-+ | select* filter sketch rebuild | color texture | measure+ analysis | pane+ options help"></div>
		<div class="bar empty"></div>
		<div class="bar view" data-tools="render- torch | zoomfit zoomarea zoominout zoomsel- rotate pan globe- views+ wire hlv hlr shadededge* shaded shadow section ball"></div>
		<div class="bar" data-tools="edraw animate"></div>
	</div>
	<div class="row">
		<div class="bar feat" data-tools="featmgr*+ sketchmgr+ surfmgr+ | extrude cut revolve dome sweep loft | fillet chamfer rib shell draft hole | lpattern cpattern mirror | refgeo+ curve+"></div>
		<div class="bar std" data-tools="cube1- cube2- cube2- cube2- cube2- cube1- cube3- | sk1 sk2 sk3 | lib1 lib2"></div>
	</div>

	<main>
		<div class="bar side" data-tools="plate s1- s2- s3- s4- s5- s6- s7- s8- | cut cutgreen | s9- s10- s11- s12- | fold1 fold2 vent"></div>
		<div class="bar side wide" data-tools="u1 u2 u3 u4 u5 u6 u7 u8 u9 u10 u11 | x1- x1- x1- fillet | refgeo+ curve+"></div>

		<aside class="tree">
			<div class="tabs">
				<button class="on" title="FeatureManager"><svg class="ic"><use href="#part"/></svg></button>
				<button title="PropertyManager"><svg class="ic"><use href="#props"/></svg></button>
				<button title="ConfigurationManager"><svg class="ic"><use href="#config"/></svg></button>
				<span class="fill"></span>
				<button class="round" title="Expand"><svg class="ic"><use href="#dr"/></svg></button>
			</div>
			<div class="list">
				<p><svg class="ic"><use href="#part"/></svg>零件1</p>
				<ul>
					<li><svg class="pm"><use href="#plus"/></svg><svg class="ic"><use href="#folderA"/></svg>注解</li>
					<li><svg class="pm"><use href="#plus"/></svg><svg class="ic"><use href="#binder"/></svg>设计活页夹</li>
					<li><svg class="pm"><use href="#plus"/></svg><svg class="ic"><use href="#folderB"/></svg>实体(1)</li>
					<li><svg class="pm"></svg><svg class="ic"><use href="#material"/></svg>材质 &lt;未指定&gt;</li>
					<li><svg class="pm"><use href="#plus"/></svg><svg class="ic"><use href="#light"/></svg>光源与相机</li>
					<li><svg class="pm"></svg><svg class="ic"><use href="#plane"/></svg>前视基准面</li>
					<li><svg class="pm"></svg><svg class="ic"><use href="#plane"/></svg>上视基准面</li>
					<li><svg class="pm"></svg><svg class="ic"><use href="#plane"/></svg>右视基准面</li>
					<li><svg class="pm"></svg><svg class="ic"><use href="#origin"/></svg>原点</li>
					<li><svg class="pm"><use href="#plus"/></svg><svg class="ic"><use href="#extrude"/></svg>拉伸1</li>
					<li><svg class="pm"><use href="#plus"/></svg><svg class="ic"><use href="#cut"/></svg>切除-拉伸1</li>
					<li><svg class="pm"></svg><svg class="ic"><use href="#flex"/></svg>弯曲1</li>
				</ul>
			</div>
		</aside>
		<div class="split"><svg viewBox="0 0 4 22"><path d="M4 0v6L0 3zM4 8v6l-4-3zM4 16v6l-4-3z"/></svg></div>

		<section class="canvas">
			<svg class="ring" viewBox="490 395 380 375">
				<defs>
					<linearGradient id="outer" gradientUnits="userSpaceOnUse" x1="500" y1="0" x2="862" y2="0">
						<stop offset="0" stop-color="#7c7c7c"/><stop offset=".2" stop-color="#a6a6a6"/><stop offset=".27" stop-color="#959595"/><stop offset=".38" stop-color="#636263"/><stop offset=".62" stop-color="#5a585a"/><stop offset=".72" stop-color="#655d64"/><stop offset=".87" stop-color="#7f7080"/><stop offset="1" stop-color="#666067"/>
					</linearGradient>
					<linearGradient id="inner" gradientUnits="userSpaceOnUse" x1="525" y1="0" x2="841" y2="0">
						<stop offset="0" stop-color="#625a60"/><stop offset=".12" stop-color="#7c6e7c"/><stop offset=".22" stop-color="#70656f"/><stop offset=".32" stop-color="#5d5a5c"/><stop offset=".58" stop-color="#5b5b5b"/><stop offset=".7" stop-color="#808080"/><stop offset=".81" stop-color="#a6a6a6"/><stop offset=".9" stop-color="#8a8a8a"/><stop offset="1" stop-color="#6c6c6c"/>
					</linearGradient>
					<clipPath id="bore"><path d="M525 518A158 102 3 0 1 841 527A158 102 3 0 1 525 518z"/></clipPath>
				</defs>
				<path fill="url(#outer)" stroke="#000" d="M504 517L500 636A179 116 3 0 0 858 652L862 528A179 116 3 0 1 504 517z"/>
				<!-- engraved lettering, follows the band -->
				<g class="engrave">
					<text x="504" y="633" font-size="28" rotate="30">3</text>
					<text x="512" y="651" font-size="30" rotate="20">4</text>
					<text x="526 536" y="662 666" font-size="36" rotate="16 16">fj</text>
					<text x="545" y="677" font-size="42" rotate="18">k</text>
					<text x="562 592 627" y="691 703 716" font-size="48" rotate="14 8 3">opq</text>
					<text x="663 676" y="717 718" font-size="44" rotate="0 0">jr</text>
					<text x="691" y="718" font-size="48">q</text>
					<text x="728 756" y="716 706" font-size="44" rotate="-5 -10">34</text>
					<text x="781 793" y="698 692" font-size="42" rotate="-12 -16">jk</text>
					<text x="812 824" y="681 674" font-size="38" rotate="-16 -20">fp</text>
					<text x="842" y="656" font-size="28" rotate="-24">r</text>
					<text x="848" y="643" font-size="26" rotate="-24">k</text>
				</g>
				<path fill="url(#inner)" stroke="#000" clip-path="url(#bore)" d="M515 410H850V648H838A158 102 3 0 0 522 639H515z"/>
				<path fill="#c1c1c1" fill-rule="evenodd" stroke="#000" d="M504 517A179 116 3 0 1 862 528A179 116 3 0 1 504 517zM525 518A158 102 3 0 0 841 527A158 102 3 0 0 525 518z"/>
				<path fill="none" stroke="#000" d="M595 419l10 13-4 120"/>
			</svg>
			<svg class="triad" viewBox="300 910 50 55">
				<path d="M313 932l17-7" stroke="#a01c22" stroke-width="4"/><path d="M328 920l12 2-9 8z" fill="#8a1418"/>
				<path d="M313 932l8 9" stroke="#1b6a2c" stroke-width="4"/><path d="M318 943l6-6 4 11z" fill="#1b6a2c"/>
				<path d="M313 931v14" stroke="#1a1a96" stroke-width="3"/><path d="M308 945l4-3 5 3-3 9z" fill="#1a1a96"/>
				<text x="337" y="923" fill="#e01020">X</text><text x="326" y="954" fill="#1b8a3c">Y</text><text x="308" y="961" fill="#1a1ab0">Z</text>
			</svg>
			<label class="config"><select title="视图"><option>自定义</option></select><svg viewBox="0 0 11 17"><path d="M3 7h5L5.500 10z"/></svg></label>
		</section>

		<div class="scroll">
			<i></i>
			<button title="Up"><svg viewBox="0 0 16 16"><path d="M4 10l4-4 4 4"/></svg></button>
			<span class="fill"></span>
			<button title="Down"><svg viewBox="0 0 16 16"><path d="M4 6l4 4 4-4"/></svg></button>
		</div>

		<aside class="task">
			<button class="tab" title="Resources"><svg class="ic"><use href="#home"/></svg></button>
			<button class="tab on" title="Library"><svg class="ic"><use href="#books"/></svg></button>
			<button class="tab" title="Explorer"><svg class="ic"><use href="#search"/></svg></button>
			<button class="tab" title="Palette"><svg class="ic"><use href="#palette"/></svg></button>
			<button class="round" title="Expand"><svg class="ic"><use href="#dl"/></svg></button>
			<i class="rail"></i>
			<button class="round" title="Expand"><svg class="ic"><use href="#dl"/></svg></button>
		</aside>

		<div class="bar side right" data-tools="sketch sk3d dim | line rect circle arc1 arc2 arc3 skfillet- center spline point grid | r1- r2- r3-+ | r4- r5- r6- r7- r8- r9-"></div>
	</main>

	<footer>
		<button class="start"><svg viewBox="0 0 18 18"><use href="#win"/></svg>start</button>
		<i class="dots"></i>
		<div class="quick">
			<a href="#" title="Desktop"><svg class="ic"><use href="#desk"/></svg></a>
			<a href="#" title="Internet Explorer"><svg class="ic"><use href="#ie"/></svg></a>
			<a href="#" title="Search"><svg class="ic"><use href="#find"/></svg></a>
			<a href="#" title="Calculator"><svg class="ic"><use href="#calc"/></svg></a>
			<span class="more">»</span>
		</div>
		<i class="dots"></i>
		<div class="wins">
			<button><svg class="ic"><use href="#mail"/></svg>Chandle Qian - Inbox...</button>
			<button class="on"><svg class="ic"><use href="#sw"/></svg>SolidWorks 2007 - [...</button>
			<button><svg class="ic"><use href="#docs"/></svg>My Documents</button>
			<button><svg class="ic"><use href="#iedoc"/></svg>曲面阵列的问题，...</button>
		</div>
		<i class="dots"></i>
		<div class="tray">
			<svg class="ic"><use href="#t1"/></svg><svg class="ic"><use href="#t2"/></svg><svg class="ic"><use href="#t3"/></svg><svg class="ic"><use href="#t4"/></svg><svg class="ic"><use href="#t5"/></svg><svg class="ic"><use href="#t6"/></svg>
			<time>17:32</time>
		</div>
	</footer>

	<script src="tools.js"></script>
</body>
</html>
```
FILE: styles.css
```
* {
	box-sizing: border-box;
}
body {
	margin: 0;
	height: 100vh;
	display: flex;
	flex-direction: column;
	overflow: hidden;
	background: #ece9d8;
	color: #000;
	font: 12px/18px "Noto Sans", "Noto Sans CJK SC", sans-serif;
}
button {
	margin: 0;
	padding: 0;
	border: 0;
	background: none;
	font: inherit;
	color: inherit;
}
a {
	color: inherit;
	text-decoration: none;
}
.sprite {
	display: none;
}
.ic {
	display: block;
	width: 16px;
	height: 16px;
	flex: none;
}
.fill {
	flex: 1;
}

/* icon paints */
.y { fill: #f2d43c; stroke: #1c1600; }
.g { fill: #2c9a44; stroke: #06280c; }
.o { fill: #f3a032; stroke: #4c2a00; }
.n { fill: none; stroke: #000; }
.b { fill: none; stroke: #1c3fb4; }
.bb { fill: none; stroke: #2444c0; stroke-width: 2; }
.k { fill: none; stroke: #0c149c; stroke-width: 2; }
.rd { fill: #fff; stroke: #c22; }
.fo { fill: #ffe27a; stroke: #b98a1c; }
.d { fill: none; stroke: currentColor; }
.f { fill: currentColor; }
.lens { fill: #b5dafa; stroke: #233f66; }
.hd { stroke: #123; stroke-width: 3; }

/* title and menu */
.title {
	display: flex;
	align-items: center;
	height: 26px;
	padding: 0 2px;
	background: linear-gradient(#3f9bff, #0a62ee 4px, #0054e3 12px, #0066ff 22px, #0040c4);
}
.title h1 {
	flex: 1;
	margin: 0 0 0 3px;
	color: #fff;
	font: bold 14px "Open Sans", "Noto Sans CJK SC", sans-serif;
	text-shadow: 1px 1px #0a2a80;
}
.cap {
	width: 20px;
	height: 21px;
	margin-left: 3px;
	border: 1px solid #fff;
	border-radius: 3px;
	background: linear-gradient(135deg, #7ba3f5, #2a5fe0 50%, #1c4fc8);
}
.cap.close {
	background: linear-gradient(135deg, #f0a08a, #dd4a22 50%, #c23a14);
}
.cap svg {
	display: block;
	width: 18px;
	height: 19px;
	fill: none;
	stroke: #fff;
}
.menu {
	display: flex;
	align-items: center;
	height: 20px;
	padding-left: 4px;
}
.menu a {
	margin: 0 7px 0 5px;
}
.menu button {
	width: 18px;
	height: 18px;
	margin-left: 1px;
	background: #f4f2e8;
}
.menu button svg {
	display: block;
	fill: none;
	stroke: #555;
}

/* toolbars */
.row {
	display: flex;
	height: 31px;
	border-top: 1px solid #aca899;
	box-shadow: inset 0 1px #fff;
}
.bar {
	display: flex;
	align-items: center;
	padding-right: 1px;
	border-right: 1px solid #aca899;
	color: #b9b599;
}
.bar::before {
	content: "";
	width: 3px;
	height: 22px;
	margin: 0 4px 0 3px;
	border: solid #aca899;
	border-width: 0 1px;
	background: #fff;
}
.feat {
	margin-left: 3px;
}
.empty {
	width: 37px;
}
.view {
	margin-left: 60px;
	border-left: 1px solid #aca899;
}
.std {
	margin-left: 246px;
	border-left: 1px solid #aca899;
}
.tool {
	display: flex;
	align-items: center;
	height: 24px;
	border: 1px solid transparent;
	border-radius: 3px;
}
.tool .ic {
	margin: 0 2px 0 3px;
}
.tool.on {
	border-color: #8a9cb8;
	background: #fff;
}
.drop {
	width: 13px;
	height: 16px;
	fill: #000;
}
.tool:disabled {
	color: #b9b599;
}
.tool:disabled .drop {
	fill: #c5c2b0;
}
.sep {
	width: 1px;
	height: 22px;
	margin: 0 4px 0 3px;
	background: #c5c2b0;
}
main {
	flex: 1;
	display: flex;
	min-height: 0;
}
.side {
	align-self: flex-start;
	flex-direction: column;
	align-items: flex-start;
	width: 30px;
	padding: 0 0 1px 2px;
	border-bottom: 1px solid #aca899;
}
.side::before {
	width: 24px;
	height: 3px;
	margin: 4px 0 3px;
	border-width: 1px 0;
}
.side .tool {
	height: 23px;
}
.side .sep {
	width: 24px;
	height: 1px;
	margin: 3px 0 4px;
}
.wide {
	width: 43px;
	padding-left: 3px;
}
.wide::before,
.wide .sep {
	width: 36px;
}
.right {
	width: 42px;
	padding-left: 2px;
	border-right: 0;
}
.right::before,
.right .sep {
	width: 34px;
}

/* feature tree */
.tree {
	display: flex;
	flex-direction: column;
	width: 196px;
	padding: 8px 1px 0 2px;
	border: solid #a3b5ae;
	border-width: 1px 1px 0;
	margin-top: 3px;
}
.tabs {
	display: flex;
	align-items: flex-end;
	height: 30px;
	margin-top: -8px;
}
.tabs button {
	display: flex;
	align-items: center;
	justify-content: center;
	width: 26px;
	height: 22px;
	margin-right: 2px;
	border: 1px solid #91a7b4;
	border-bottom: 0;
	border-radius: 3px 3px 0 0;
	background: #f6f5ee;
}
.tabs .on {
	width: 30px;
	height: 26px;
	margin: 0;
	border-top: 2px solid #f09a30;
	background: #fff;
}
.tabs .round {
	width: 16px;
	height: 26px;
	border: 0;
	background: none;
}
.list {
	flex: 1;
	background: linear-gradient(#5cbcff, #a0d2f6 50%, #dae4ea 90%, #e8e8e8);
}
.list p {
	display: flex;
	align-items: center;
	height: 18px;
	margin: 0;
	padding-left: 3px;
}
.list p .ic {
	margin-right: 4px;
}
.list ul {
	margin: 0;
	padding: 0 0 1px;
	list-style: none;
	border-bottom: 2px solid #111;
	box-shadow: inset 0 -1px #e4e400;
}
.list li {
	display: flex;
	align-items: center;
	height: 18px;
	padding-left: 7px;
}
.pm {
	width: 9px;
	height: 9px;
	margin: 3px 6px 0 0;
}
.list li .ic {
	margin-right: 5px;
}
.split {
	display: flex;
	align-items: center;
	width: 5px;
	border-right: 1px solid #9db3c4;
}
.split svg {
	width: 4px;
	height: 22px;
}

/* model view */
.canvas {
	position: relative;
	flex: 1;
	background: linear-gradient(#55b9ff, #a2d3f6 50%, #d8e2ea 90%, #e8e8e8);
}
.ring {
	position: absolute;
	left: 216px;
	top: 287px;
	width: 380px;
	height: 375px;
}
.engrave {
	fill: #b4b4b4;
	stroke: #0c0c0c;
	stroke-width: 1;
	font-family: Lato, sans-serif;
	font-weight: 300;
}
.triad {
	position: absolute;
	left: 26px;
	bottom: 25px;
	width: 50px;
	height: 55px;
	font: 9px "Liberation Serif", serif;
}
.config {
	position: absolute;
	left: 0;
	bottom: 1px;
	display: flex;
	width: 128px;
	height: 19px;
	border: 1px solid #000;
	background: #efedc4;
}
.config select {
	flex: 1;
	appearance: none;
	padding: 0 0 0 20px;
	border: 0;
	border-right: 1px solid #000;
	border-radius: 0;
	background: none;
	color: #000;
	font: inherit;
}
.config svg {
	width: 11px;
}
.scroll {
	display: flex;
	flex-direction: column;
	width: 17px;
	padding-bottom: 2px;
	background: #fefefc;
}
.scroll i {
	height: 6px;
	margin-bottom: 2px;
	border-bottom: 1px solid #000;
	background: #ece9d8;
}
.scroll button {
	width: 16px;
	height: 16px;
	border: 1px solid #e0ddd0;
	background: #f4f3ee;
}
.scroll svg {
	display: block;
	fill: none;
	stroke: #b8b6a8;
	stroke-width: 2;
}

/* task pane */
.task {
	display: flex;
	flex-direction: column;
	align-items: flex-start;
	width: 27px;
	padding-top: 26px;
	border-left: 2px solid #9db0ac;
}
.task .tab {
	width: 21px;
	height: 27px;
	border: 1px solid #91a7b4;
	border-left: 0;
	border-radius: 0 4px 4px 0;
}
.task .tab.on {
	border-right: 2px solid #f09a30;
	background: #fff;
}
.task .round {
	margin: 3px 0 8px 1px;
}
.task .rail {
	flex: 1;
	width: 5px;
	margin: 0 0 3px 6px;
	border: solid #aca899;
	border-width: 0 1px;
	background: #f6f4ea;
}
.task .rail + .round {
	margin-bottom: 59px;
}

/* taskbar */
footer {
	display: flex;
	height: 34px;
	background: linear-gradient(#1f5fd6, #3f8cf3 3px, #2a63dc 7px, #2459d8 26px, #1a44a8);
	color: #fff;
	font-size: 11px;
}
.start {
	display: flex;
	align-items: center;
	width: 97px;
	margin-top: 4px;
	padding-left: 10px;
	border-radius: 0 10px 10px 0;
	background: linear-gradient(#5fae5c, #3c9a3c 6px, #389438 20px, #2a7a2a);
	font: italic bold 17px "Open Sans", sans-serif;
	text-shadow: 1px 1px 1px #1c4a1c;
}
.start svg {
	width: 19px;
	height: 19px;
	margin-right: 4px;
}
.dots {
	width: 5px;
	margin: 10px 8px 3px;
	background: radial-gradient(#153a94 1px, transparent 2px) 0 0 / 5px 5px;
}
.quick {
	display: flex;
	align-items: center;
	gap: 7px;
	width: 112px;
	padding-top: 4px;
}
.more {
	margin: -10px 0 0 15px;
}
.wins {
	flex: 1;
	display: flex;
	gap: 2px;
	padding: 7px 0 3px;
}
.wins button {
	display: flex;
	align-items: center;
	width: 158px;
	padding-left: 8px;
	border-radius: 3px;
	background: linear-gradient(#5f9cfb, #3c81f3 4px, #3a7cf0 18px, #2f6ade);
	white-space: nowrap;
}
.wins .ic {
	margin-right: 4px;
}
.wins .on {
	background: #1c4cae;
}
.tray {
	display: flex;
	align-items: center;
	gap: 2px;
	width: 164px;
	margin-left: 32px;
	padding: 4px 0 0 9px;
	border-left: 1px solid #0c3c90;
	background: linear-gradient(#0c5fd0, #1aa0f0 5px, #1290e8 26px, #0d70c4);
}
.tray time {
	margin-left: 6px;
}
```
FILE: tools.js
```
// fills each bar from its list: "|" separator, "*" pressed, "-" disabled, "+" has a menu
var bars = document.querySelectorAll('[data-tools]');
for (var i = 0; i < bars.length; i++) {
	bars[i].innerHTML = bars[i].getAttribute('data-tools').split(' ').map(function (t) {
		if (t === '|') return '<span class="sep"></span>';
		var name = t.replace(/[-+*]/g, '');
		return '<button class="tool' + (t.indexOf('*') > 0 ? ' on' : '') + '" title="' + name + '"' +
			(t.indexOf('-') > 0 ? ' disabled' : '') + '>' +
			'<svg class="ic"><use href="#' + name + '"/></svg>' +
			(t.indexOf('+') > 0 ? '<svg class="drop" viewBox="0 0 13 16"><path d="M3 7h6l-3 3z"/></svg>' : '') +
			'</button>';
	}).join('');
}
```
